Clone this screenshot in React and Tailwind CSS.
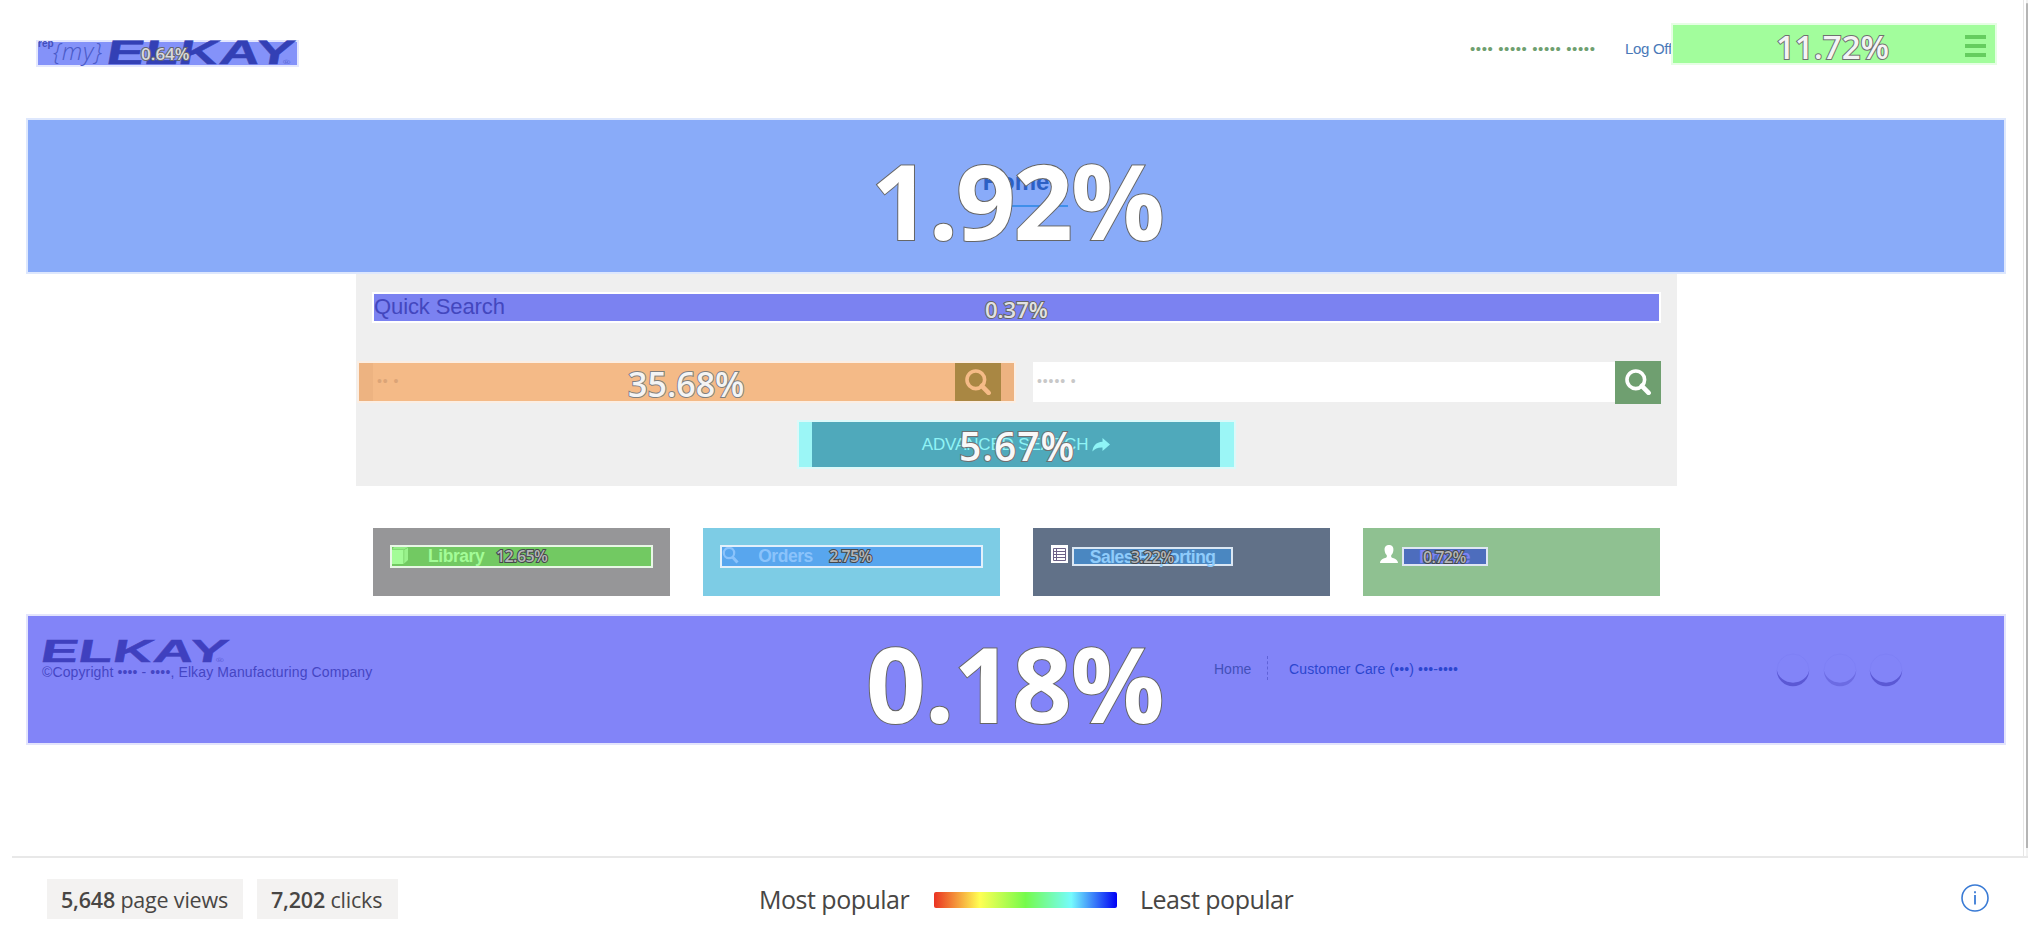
import React from "react";

const arial = "font-['Liberation_Sans',Arial,sans-serif]";
const segoe = "font-['Open_Sans','Noto_Sans',sans-serif]";

function Pct({ className, children }) {
  return (
    <span className={`absolute whitespace-nowrap leading-none [paint-order:stroke_fill] ${segoe} ${className}`}>
      {children}
    </span>
  );
}

function Search({ className }) {
  return (
    <svg viewBox="0 0 26 26" className={className} fill="none" stroke="currentColor">
      <circle cx="10.8" cy="10.8" r="8.8" strokeWidth="3.6" />
      <path d="M16.8 16.8 L23.6 23.8" strokeWidth="4.6" strokeLinecap="round" />
    </svg>
  );
}

function Elkay({ className }) {
  return (
    <span className={`inline-flex origin-left skew-x-[5deg] items-baseline whitespace-nowrap leading-none ${arial} ${className}`}>
      <span className="font-bold italic [-webkit-text-stroke:0.4px_currentColor]">ELKAY</span>
      <span className="-ml-[7px] text-[6px] opacity-60">®</span>
    </span>
  );
}

function Header() {
  return (
    <header className={`flex h-[118px] shrink-0 items-start pl-9 ${arial}`}>
      <div className="relative mt-10 flex h-[27px] w-[263px] border-2 border-[#e4e7fd] bg-[#8492f9]">
        <span className="h-[10px] w-[15px] text-[10px] font-semibold leading-[4px] text-[#4450bd]">rep</span>
        <span className={`-mt-[5px] w-[54px] whitespace-nowrap text-[24px] italic leading-[28px] tracking-[0.7px] text-[#4a5ac8] ${segoe} font-light`}>
          {"{my}"}
        </span>
        <Elkay className="-mt-[7px] -ml-px h-[34px] scale-x-[1.66] text-[34px] text-[#3340b5]" />
        <Pct className="left-[103px] top-[3px] text-[17px] font-semibold text-[#d9d9dc] [-webkit-text-stroke:2px_#63666f]">0.64%</Pct>
      </div>
      <span className="ml-[1171px] mt-[39px] w-[155px] whitespace-nowrap text-[15px] leading-5 tracking-[0.6px] text-[#6f9f70]">
        •••• ••••• ••••• •••••
      </span>
      <span className="mt-[39px] h-5 w-[46px] overflow-hidden whitespace-nowrap text-[15px] leading-5 tracking-[-0.3px] text-[#4a79b8]">
        Log Off
      </span>
      <div className="relative mt-[23px] flex h-[42px] w-[326px] items-center justify-end border-2 border-[#e6fee4] bg-[#a2fd9c] pr-[9px] pt-[4px]">
        <div className="flex flex-col gap-[5px]">
          <span className="h-1 w-[21px] bg-[#65cd5f]" />
          <span className="h-1 w-[21px] bg-[#65cd5f]" />
          <span className="h-1 w-[21px] bg-[#65cd5f]" />
        </div>
        <Pct className="left-[103px] top-[5px] text-[33px] font-semibold text-[#f4f4f4] [-webkit-text-stroke:2px_#707070]">11.72%</Pct>
      </div>
    </header>
  );
}

function QuickSearch() {
  return (
    <section className={`ml-[356px] flex h-[212px] w-[1321px] shrink-0 flex-col bg-[#efefef] pt-[18px] ${arial}`}>
      <div className="relative ml-4 h-[31px] w-[1289px] border-2 border-white bg-[#7b82f1]">
        <h2 className="text-[22px] leading-[26px] tracking-[-0.1px] text-[#4347be]">Quick Search</h2>
        <Pct className="left-[611px] top-[4px] text-[22px] font-semibold text-[#e2e2e2] [-webkit-text-stroke:2px_#666]">0.37%</Pct>
      </div>
      <div className="mt-[38px] flex h-[42px] items-center">
        <div className="relative ml-px flex h-[42px] w-[659px] border-2 border-[#fbeee3] bg-[#edb381]">
          <div className="ml-[14px] w-[582px] bg-[#f4ba87] pl-[4px] text-[14px] leading-[37px] tracking-[0.9px] text-[#dba477]">•• •</div>
          <div className="flex w-[46px] items-center justify-center bg-[#a98743] text-[#f5bb87]">
            <Search className="size-[26px]" />
          </div>
          <Pct className="left-[269px] top-[4px] text-[34px] font-semibold text-[#f4f4f4] [-webkit-text-stroke:2px_#808080]">35.68%</Pct>
        </div>
        <div className="ml-[17px] h-10 w-[582px] bg-white pl-1 text-[14px] leading-[38px] tracking-[0.9px] text-[#c8c8c8]">••••• •</div>
        <div className="flex h-[43px] w-[46px] items-center justify-center bg-[#6f9f70] text-white">
          <Search className="size-[26px]" />
        </div>
      </div>
      <div className="relative ml-[441px] mt-[17px] flex h-[49px] w-[439px] border-2 border-[#dcf9f9] bg-[#9bf6f6] pl-[13px]">
        <div className="flex w-[408px] items-center justify-center bg-[#4fa9bb] text-[17px] tracking-[-0.15px] text-[#8ff4f6]">
          ADVANCED SEARCH
          <svg viewBox="0 0 18 14" className="ml-[4px] h-[14px] w-[18px]" fill="currentColor">
            <path d="M10.5 0 L18 6.6 L10.5 13 V9.4 C6 9.2 3 10.2 0.4 13.6 C0.8 8 4 4 10.5 3.7 Z" />
          </svg>
        </div>
        <Pct className="left-[160px] top-[4px] text-[39px] font-semibold tracking-[1px] text-[#f8f8f8] [-webkit-text-stroke:2px_#707070]">5.67%</Pct>
      </div>
    </section>
  );
}

function Tiles() {
  const label = "whitespace-nowrap text-[17.5px] font-bold leading-[19px] tracking-[-0.45px]";
  const pct = "text-[16px] font-semibold tracking-[-0.6px] text-[#b4b6b8] [-webkit-text-stroke:2px_#45484c]";
  return (
    <section className={`ml-[372.5px] mt-[42px] flex h-[68px] w-[1288px] shrink-0 justify-between ${arial}`}>
      <div className="w-[297.5px] bg-[#969698] pl-[17.5px] pt-[17px]">
        <div className="relative flex h-[23px] w-[263px] border-2 border-[#e8f7e6] bg-[#72c962] text-[#a3fc97]">
          <svg viewBox="0 0 16 17" className="h-[17px] w-4" fill="currentColor">
            <path d="M0 3 H11.5 V17 H0 Z" />
            <path d="M2 0 H16 L12 2.4 H0 Z" opacity=".7" />
            <path d="M12.2 3 L16 0.8 V13 L12.2 16.6 Z" opacity=".8" />
          </svg>
          <span className={`ml-[20px] ${label}`}>Library</span>
          <Pct className={`left-[104px] top-[1px] ${pct}`}>12.65%</Pct>
        </div>
      </div>
      <div className="w-[297.5px] bg-[#7dcce5] pl-[17.5px] pt-[17px]">
        <div className="relative flex h-[23px] w-[263px] border-2 border-[#e2f0fb] bg-[#58a6ee] text-[#8bc3fb]">
          <svg viewBox="0 0 17 17" className="size-[17px]" fill="none" stroke="currentColor" strokeWidth="2.2">
            <circle cx="7" cy="6" r="5.2" />
            <path d="M10.5 10 L15.5 15.5" strokeWidth="3" />
          </svg>
          <span className={`ml-[19px] ${label}`}>Orders</span>
          <Pct className={`left-[107px] top-[1px] ${pct}`}>2.75%</Pct>
        </div>
      </div>
      <div className="flex w-[297.5px] bg-[#617188] pl-[18.5px] pt-[17px]">
        <svg viewBox="0 0 17 18" className="h-[18px] w-[17px]">
          <rect width="17" height="18" fill="#fff" />
          <path d="M2.5 3.5 H14.5 V15.5 H2.5 Z M5.5 3.5 V15.5 M2.5 6.5 H14.5 M2.5 9.5 H14.5 M2.5 12.5 H14.5" fill="none" stroke="#6d6288" />
        </svg>
        <div className="relative ml-[3.5px] mt-[2px] flex h-[19px] w-[161px] border-2 border-[#dbe7f3] bg-[#4a87c1] pl-[16px] text-[#8fccfb]">
          <span className="whitespace-nowrap text-[17.5px] font-bold leading-[16px] tracking-[-0.5px]">Sales Reporting</span>
          <Pct className={`left-[57px] top-0 ${pct}`}>3.22%</Pct>
        </div>
      </div>
      <div className="flex w-[297.5px] bg-[#8fc191] pl-[17.5px] pt-[17px]">
        <svg viewBox="0 0 18 18" className="size-[18px]" fill="#fff">
          <path d="M9 0 C12.3 0 13.6 2.2 13.4 5.2 C13.2 7.4 12.4 9 11.2 10.2 V12 C12.2 13.4 18 13.6 18 18 H0 C0 13.6 5.8 13.4 6.8 12 V10.2 C5.6 9 4.8 7.4 4.6 5.2 C4.4 2.2 5.7 0 9 0 Z" />
        </svg>
        <div className="relative ml-[3.5px] mt-[2px] flex h-[19px] w-[86px] border-2 border-[#dfe6f3] bg-[#4d6dbd] pl-[15px] text-[#7f84f6]">
          <span className="whitespace-nowrap text-[17.5px] font-bold leading-[16px] tracking-[-0.5px]">Profile</span>
          <Pct className={`left-[19px] top-0 ${pct}`}>0.72%</Pct>
        </div>
      </div>
    </section>
  );
}

function Arc({ opacity }) {
  return (
    <svg viewBox="0 0 36 36" className="size-9" fill="none">
      <path d="M1.8 17 A16.2 16.2 0 0 0 34.2 17 A16.4 15 0 0 1 1.8 17 Z" fill="#4a46c4" fillOpacity={opacity} />
      <path d="M2 17 A16 16 0 0 1 34 17" stroke="#4a46c4" strokeWidth="0.5" strokeOpacity="0.12" />
    </svg>
  );
}

function Footer() {
  return (
    <footer className={`relative ml-[26px] mt-[18px] flex h-[131px] w-[1980px] shrink-0 border-2 border-[#e3e4fc] bg-[#8284f8] ${arial}`}>
      <div className="flex w-[1186px] flex-col pl-[14px] pt-[19px]">
        <Elkay className="-ml-[2px] h-[29px] w-[110px] scale-x-[1.76] text-[32px] text-[#3f40bf]" />
        <span className="whitespace-nowrap text-[14px] leading-4 tracking-[0.12px] text-[#4546c4]">
          ©Copyright •••• - ••••, Elkay Manufacturing Company
        </span>
      </div>
      <nav className="mt-[40px] flex h-6 w-[562px] text-[14px] leading-[26px]">
        <span className="w-[53px] text-[#4350b8]">Home</span>
        <span className="w-[22px] border-l border-dashed border-[#5f62d8]" />
        <span className="whitespace-nowrap tracking-[0.12px] text-[#2c46cf]">Customer Care (•••) •••-••••</span>
      </nav>
      <div className="mt-[37px] flex h-9 gap-[10.5px] -ml-[1px]">
        <Arc opacity={0.7} />
        <Arc opacity={0.4} />
        <Arc opacity={0.7} />
      </div>
      <Pct className="left-[838px] top-[15px] text-[104px] font-bold tracking-[-0.8px] text-white [-webkit-text-stroke:2px_#666]">0.18%</Pct>
    </footer>
  );
}

function StatusBar() {
  return (
    <div className={`flex h-[78px] items-start pl-[47px] pt-[21px] text-[#484644] ${segoe}`}>
      <div className="h-10 w-[196px] whitespace-nowrap bg-[#f3f2f1] pl-[14px] text-[21.5px] leading-[42px] tracking-[-0.2px]">
        <span className="font-semibold">5,648</span> page views
      </div>
      <div className="ml-[14px] h-10 w-[141px] whitespace-nowrap bg-[#f3f2f1] pl-[14px] text-[21.5px] leading-[42px] tracking-[-0.2px]">
        <span className="font-semibold">7,202</span> clicks
      </div>
      <div className="ml-[359px] flex h-[41px] items-center whitespace-nowrap text-[25px] tracking-[-0.5px]">
        <span className="w-[177px] pl-[2px]">Most popular</span>
        <span className="h-[16px] w-[183px] rounded-[2px] bg-[linear-gradient(90deg,#ea3323_0%,#ffff54_25%,#75fb4c_50%,#75fbfd_75%,#0000f5_100%)]" />
        <span className="ml-[23px]">Least popular</span>
      </div>
      <svg viewBox="0 0 30 30" className="ml-auto mr-[38px] mt-[4px] size-[30px]" fill="none" stroke="#3a7bd5">
        <circle cx="15" cy="15" r="13" strokeWidth="1.6" />
        <path d="M15 12 V21.5" strokeWidth="1.8" />
        <path d="M15 8.3 V10.3" strokeWidth="1.8" />
      </svg>
    </div>
  );
}

export default function App() {
  return (
    <div className="flex h-[936px] w-[2028px] flex-col overflow-hidden bg-white">
      <div className="flex h-[856px] shrink-0">
        <main className="flex w-[2023px] flex-col">
          <Header />
          <section className={`relative ml-[26px] flex h-[156px] w-[1980px] shrink-0 justify-center border-2 border-[#dde7fd] bg-[#89abf9] ${arial}`}>
            <h1 className="mt-[47px] h-[40px] w-[104px] border-b-2 border-[#3f8fea] text-center text-[24px] font-bold leading-[30px] text-[#2c60c4]">
              Home
            </h1>
            <Pct className="left-[843px] top-[28px] text-[104px] font-bold tracking-[-2px] text-white [-webkit-text-stroke:2px_#666]">1.92%</Pct>
          </section>
          <QuickSearch />
          <Tiles />
          <Footer />
        </main>
        <div className="w-[3px] border-l border-[#e6e6e6]" />
        <div className="flex w-[2px] flex-col bg-[#f1f1f1] pb-2 pt-[3px]">
          <div className="grow rounded-t bg-[#b5b5b5]" />
        </div>
      </div>
      <div className="ml-3 h-[2px] w-[2016px] shrink-0 bg-[#e8e8e8]" />
      <StatusBar />
    </div>
  );
}
